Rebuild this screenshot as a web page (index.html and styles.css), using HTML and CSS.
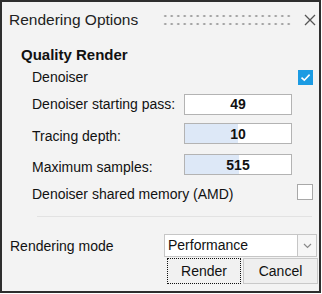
FILE: index.html
```html
<!DOCTYPE html>
<html>
<head>
<meta charset="utf-8">
<link rel="stylesheet" href="styles.css">
</head>
<body>
<div class="window">
  <div class="titlebar">
    <span class="title">Rendering Options</span>
    <span class="grip"></span>
    <svg class="close" width="12" height="12" viewBox="0 0 12 12"><path d="M1 1 L11 11 M11 1 L1 11" stroke="#555" stroke-width="1.3" fill="none"/></svg>
  </div>
  <div class="section-title">Quality Render</div>
  <div class="row row-a">
    <span class="label">Denoiser</span>
    <span class="check checked"><svg width="15" height="15" viewBox="0 0 15 15"><path d="M3.5 7.6 L6.3 10.2 L11.6 4.6" stroke="#fff" stroke-width="1.6" fill="none"/></svg></span>
  </div>
  <div class="row row-b">
    <span class="label">Denoiser starting pass:</span>
    <span class="field">49</span>
  </div>
  <div class="row row-c">
    <span class="label low">Tracing depth:</span>
    <span class="field"><span class="fill" style="width:50%"></span><span class="val">10</span></span>
  </div>
  <div class="row row-c">
    <span class="label low">Maximum samples:</span>
    <span class="field"><span class="fill" style="width:51%"></span><span class="val">515</span></span>
  </div>
  <div class="row row-e">
    <span class="label low wide">Denoiser shared memory (AMD)</span>
    <span class="check"></span>
  </div>
  <div class="sep"></div>
  <div class="mode-row">
    <span class="mode-label">Rendering mode</span>
    <span class="select">Performance</span>
    <span class="arrow"><svg width="9" height="6" viewBox="0 0 9 6"><path d="M1 1 L4.5 4.5 L8 1" stroke="#8a8a8a" stroke-width="1.2" fill="none"/></svg></span>
  </div>
  <div class="buttons">
    <span class="btn focus">Render</span>
    <span class="btn">Cancel</span>
  </div>
</div>
</body>
</html>
```
FILE: styles.css
```css
* { box-sizing: border-box; }
body {
  margin: 0;
  background: #ffffff;
  font-family: "Liberation Sans", Arial, sans-serif;
  color: #111;
}
.window {
  width: 321px;
  height: 293px;
  border: 2px solid #2e2e2e;
  background: #f3f3f3;
  display: flex;
  flex-direction: column;
}
.titlebar {
  height: 36px;
  display: flex;
  align-items: center;
  padding-left: 7px;
  padding-right: 3px;
}
.title {
  font-size: 15.5px;
  color: #222;
  line-height: 36px;
}
.grip {
  margin-left: auto;
  width: 130px;
  height: 16px;
  background-image: radial-gradient(circle, #9c9c9c 0.9px, transparent 1.3px);
  background-size: 6.5px 8px;
  margin-right: 12px;
}
.close {
  display: block;
}
.section-title {
  margin-top: 8px;
  padding-left: 19px;
  font-size: 15px;
  font-weight: bold;
  line-height: 18px;
  color: #111;
}
.row {
  display: flex;
  align-items: center;
  padding-left: 30px;
  padding-right: 6px;
  font-size: 14px;
}
.row-a { height: 26px; }
.row-b { height: 28px; }
.row-c { height: 31px; }
.row-e { height: 24px; }
.label {
  width: 152px;
  flex: none;
  white-space: nowrap;
}
.label.low { padding-top: 4px; }
.label.wide { width: auto; }
.field {
  position: relative;
  width: 108px;
  height: 21px;
  background: #fff;
  border: 1px solid #b3b3b3;
  display: flex;
  align-items: center;
  justify-content: center;
  font-weight: bold;
  font-size: 14px;
  color: #111;
}
.fill {
  position: absolute;
  left: 0;
  top: 0;
  bottom: 0;
  background: #dde8f7;
}
.val { position: relative; }
.check {
  margin-left: auto;
  width: 16px;
  height: 16px;
  background: #fff;
  border: 1px solid #a8a8a8;
  display: flex;
}
.check.checked {
  width: 15px;
  height: 15px;
  background: #1b9be3;
  border: none;
}
.sep {
  margin-top: 12px;
  margin-left: 35px;
  margin-right: 7px;
  height: 1px;
  background: #e2e2e2;
}
.mode-row {
  margin-top: 17px;
  display: flex;
  align-items: center;
  padding-left: 8px;
  font-size: 14px;
}
.mode-label {
  width: 154px;
  flex: none;
}
.select {
  width: 134px;
  height: 23px;
  background: #fff;
  border: 1px solid #c6c6c6;
  padding-left: 3px;
  line-height: 21px;
}
.arrow {
  width: 19px;
  height: 23px;
  background: #f6f6f6;
  border: 1px solid #c6c6c6;
  border-left: none;
  display: flex;
  align-items: center;
  justify-content: center;
}
.buttons {
  margin-top: 1px;
  display: flex;
  gap: 2px;
  padding-left: 165px;
}
.btn {
  width: 75px;
  height: 26px;
  border: 1px solid #c9c9c9;
  background: #efefef;
  font-size: 14px;
  display: flex;
  align-items: center;
  justify-content: center;
}
.btn.focus {
  width: 74px;
  border: 1px dotted #111;
  background: #f1f1f1;
}
```
